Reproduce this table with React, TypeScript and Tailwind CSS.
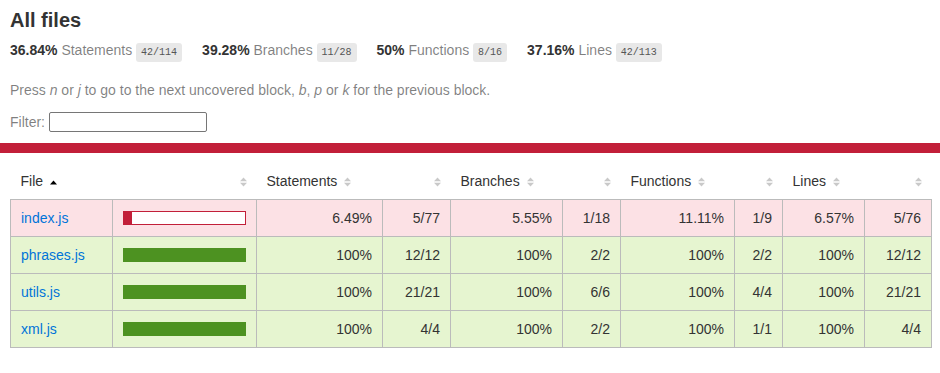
import React from "react";

type Row = {
  file: string;
  low: boolean;
  fill: number;
  cells: [string, string][];
};

const summary = [
  { pct: "36.84%", label: "Statements", frac: "42/114" },
  { pct: "39.28%", label: "Branches", frac: "11/28" },
  { pct: "50%", label: "Functions", frac: "8/16" },
  { pct: "37.16%", label: "Lines", frac: "42/113" },
];

const rows: Row[] = [
  { file: "index.js", low: true, fill: 6.49, cells: [["6.49%", "5/77"], ["5.55%", "1/18"], ["11.11%", "1/9"], ["6.57%", "5/76"]] },
  { file: "phrases.js", low: false, fill: 100, cells: [["100%", "12/12"], ["100%", "2/2"], ["100%", "2/2"], ["100%", "12/12"]] },
  { file: "utils.js", low: false, fill: 100, cells: [["100%", "21/21"], ["100%", "6/6"], ["100%", "4/4"], ["100%", "21/21"]] },
  { file: "xml.js", low: false, fill: 100, cells: [["100%", "4/4"], ["100%", "2/2"], ["100%", "1/1"], ["100%", "4/4"]] },
];

// pct / abs column widths per metric
const metricCols = [
  { name: "Statements", pct: "w-[126px]", abs: "w-[68px]" },
  { name: "Branches", pct: "w-[112px]", abs: "w-[58px]" },
  { name: "Functions", pct: "w-[114px]", abs: "w-[48px]" },
  { name: "Lines", pct: "w-[82px]", abs: "w-[67px]" },
];

function Sorter({ asc }: { asc?: boolean }) {
  if (asc) {
    return (
      <svg width="7" height="10" viewBox="0 0 7 10" className="ml-[7px] inline-block">
        <path d="M0 7.5 3.5 3.5 7 7.5z" fill="#000" />
      </svg>
    );
  }
  return (
    <svg width="7" height="10" viewBox="0 0 7 10" className="ml-[7px] inline-block">
      <path d="M0 4.2 3.5 0.5 7 4.2z M0 5.8 3.5 9.5 7 5.8z" fill="#c9c9c9" />
    </svg>
  );
}

function Chart({ fill, low }: { fill: number; low: boolean }) {
  return (
    <div className="flex h-4 items-center">
      <div className={`flex h-[14px] w-[123px] border ${low ? "border-[#C21F39]" : "border-[#4D9221]"}`}>
        <div className={low ? "bg-[#C21F39]" : "bg-[#4D9221]"} style={{ width: `${fill}%` }} />
        <div className="flex-1 bg-white" />
      </div>
    </div>
  );
}

export default function App() {
  return (
    <div className="min-h-screen bg-white font-['Liberation_Sans',Arial,sans-serif] text-[14px] text-[#333]">
      <div className="px-[10px] pt-[10px]">
        <h1 className="text-[20px] font-bold leading-5">All files</h1>

        <div className="mt-[10px] flex h-5 leading-5">
          {summary.map((s) => (
            <div key={s.label} className="pr-5 whitespace-nowrap">
              <span className="font-bold">{s.pct} </span>
              <span className="text-black/50">{s.label}</span>{" "}
              <span className="rounded-[3px] bg-[#E8E8E8] px-[5px] py-1 font-['Liberation_Mono',monospace] text-[10px] leading-none text-[#555]">
                {s.frac}
              </span>
            </div>
          ))}
        </div>

        <p className="mt-5 leading-5 text-black/50">
          Press <em>n</em> or <em>j</em> to go to the next uncovered block, <em>b</em>, <em>p</em> or <em>k</em> for the previous block.
        </p>

        <div className="mt-3 flex h-5 items-center text-black/50">
          Filter:
          <input type="search" className="ml-1 h-5 w-[158px] rounded-[2px] border border-[#767676] bg-white" />
        </div>
      </div>

      <div className="mt-[11px] h-[10px] bg-[#C21F39]" />

      <div className="px-[10px] pt-[10px]">
        <table className="w-[921px] table-fixed border-collapse leading-4">
          <thead>
            <tr>
              <th className="w-[102px] whitespace-nowrap p-[10px] text-left font-normal">
                File<Sorter asc />
              </th>
              <th className="w-[144px] p-[10px] text-right font-normal">
                <Sorter />
              </th>
              {metricCols.map((m) => (
                <React.Fragment key={m.name}>
                  <th className={`${m.pct} whitespace-nowrap p-[10px] text-left font-normal`}>
                    {m.name}
                    <Sorter />
                  </th>
                  <th className={`${m.abs} p-[10px] text-right font-normal`}>
                    <Sorter />
                  </th>
                </React.Fragment>
              ))}
            </tr>
          </thead>
          <tbody className="border border-[#bbb]">
            {rows.map((r) => (
              <tr key={r.file} className={`border-b border-[#bbb] ${r.low ? "bg-[#FCE1E5]" : "bg-[#E6F5D0]"}`}>
                <td className="whitespace-nowrap border-r border-[#bbb] p-[10px]">
                  <a href="#" className="text-[#0074D9]">{r.file}</a>
                </td>
                <td className="border-r border-[#bbb] p-[10px]">
                  <Chart fill={r.fill} low={r.low} />
                </td>
                {r.cells.map(([pct, abs], i) => (
                  <React.Fragment key={i}>
                    <td className="border-r border-[#bbb] p-[10px] text-right">{pct}</td>
                    <td className={`p-[10px] text-right ${i < 3 ? "border-r border-[#bbb]" : ""}`}>{abs}</td>
                  </React.Fragment>
                ))}
              </tr>
            ))}
          </tbody>
        </table>
      </div>
    </div>
  );
}
